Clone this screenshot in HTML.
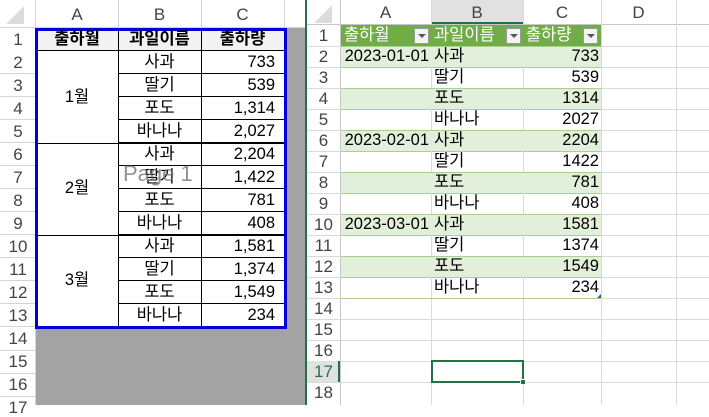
<!DOCTYPE html>
<html><head><meta charset="utf-8"><style>
*{margin:0;padding:0;box-sizing:border-box}
body{width:709px;height:405px;overflow:hidden;background:#fff;position:relative;font-family:"Liberation Sans","Noto Sans CJK KR",sans-serif;font-size:16.5px;color:#000}
div{position:absolute}
.t{white-space:nowrap;line-height:1;margin-top:-1px}
.h{color:#444;font-size:17px;text-align:center}
</style></head><body>
<!-- LEFT PANE -->
<div style="left:0;top:0;width:36px;height:28px;background:#fff;border-right:1px solid #d4d4d4;border-bottom:1px solid #d4d4d4"></div>
<div style="left:6px;top:6px;width:0;height:0;border-left:18px solid transparent;border-bottom:18px solid #dcdcdc"></div>
<div class="h t" style="left:36px;top:7px;width:82px">A</div>
<div class="h t" style="left:118px;top:7px;width:83px">B</div>
<div class="h t" style="left:201px;top:7px;width:83px">C</div>
<div style="left:118px;top:0;width:1px;height:28px;background:#d4d4d4"></div>
<div style="left:201px;top:0;width:1px;height:28px;background:#d4d4d4"></div>
<div style="left:284px;top:0;width:1px;height:28px;background:#d4d4d4"></div>
<div style="left:0;top:27px;width:305px;height:1px;background:#d4d4d4"></div>
<div style="left:35px;top:0;width:1px;height:405px;background:#d4d4d4"></div>
<div class="h t" style="left:0;top:32px;width:36px">1</div>
<div class="h t" style="left:0;top:55px;width:36px">2</div>
<div class="h t" style="left:0;top:78px;width:36px">3</div>
<div class="h t" style="left:0;top:101px;width:36px">4</div>
<div class="h t" style="left:0;top:124px;width:36px">5</div>
<div class="h t" style="left:0;top:147px;width:36px">6</div>
<div class="h t" style="left:0;top:170px;width:36px">7</div>
<div class="h t" style="left:0;top:193px;width:36px">8</div>
<div class="h t" style="left:0;top:216px;width:36px">9</div>
<div class="h t" style="left:0;top:239px;width:36px">10</div>
<div class="h t" style="left:0;top:262px;width:36px">11</div>
<div class="h t" style="left:0;top:285px;width:36px">12</div>
<div class="h t" style="left:0;top:308px;width:36px">13</div>
<div class="h t" style="left:0;top:331px;width:36px">14</div>
<div class="h t" style="left:0;top:354px;width:36px">15</div>
<div class="h t" style="left:0;top:377px;width:36px">16</div>
<div class="h t" style="left:0;top:400px;width:36px">17</div>
<div style="left:0;top:51px;width:36px;height:276px;background:repeating-linear-gradient(to bottom,transparent 0,transparent 22px,#d4d4d4 22px,#d4d4d4 23px)"></div>
<div style="left:0;top:350px;width:36px;height:1px;background:#d4d4d4"></div>
<div style="left:0;top:373px;width:36px;height:1px;background:#d4d4d4"></div>
<div style="left:0;top:396px;width:36px;height:1px;background:#d4d4d4"></div>
<div style="left:36px;top:328px;width:270px;height:77px;background:#a3a3a3"></div>
<div style="left:285px;top:28px;width:21px;height:300px;background:#a3a3a3"></div>
<!-- table -->
<div style="left:36px;top:28px;width:249px;height:23px;background:#f2f2f2"></div>
<div style="left:36px;top:51px;width:249px;height:276px;background:#fff"></div>
<div style="left:36px;top:50px;width:249px;height:1px;background:#000"></div>
<div style="left:118px;top:28px;width:1px;height:299px;background:#000"></div>
<div style="left:201px;top:28px;width:1px;height:299px;background:#000"></div>
<div style="left:36px;top:143px;width:249px;height:1px;background:#000"></div>
<div style="left:36px;top:235px;width:249px;height:1px;background:#000"></div>
<div style="left:118px;top:73px;width:167px;height:253px;background:repeating-linear-gradient(to bottom,#000 0,#000 1px,transparent 1px,transparent 23px)"></div>
<div style="left:35px;top:28px;width:252px;height:301px;border:3px solid #0000d8"></div>
<div class="t" style="left:36px;top:32px;width:82px;text-align:center;font-weight:bold">출하월</div>
<div class="t" style="left:118px;top:32px;width:83px;text-align:center;font-weight:bold">과일이름</div>
<div class="t" style="left:201px;top:32px;width:83px;text-align:center;font-weight:bold">출하량</div>
<div class="t" style="left:36px;top:90px;width:82px;text-align:center">1월</div>
<div class="t" style="left:36px;top:181px;width:82px;text-align:center">2월</div>
<div class="t" style="left:36px;top:273px;width:82px;text-align:center">3월</div>
<div class="t" style="left:118px;top:55px;width:83px;text-align:center">사과</div>
<div class="t" style="left:118px;top:78px;width:83px;text-align:center">딸기</div>
<div class="t" style="left:118px;top:101px;width:83px;text-align:center">포도</div>
<div class="t" style="left:118px;top:124px;width:83px;text-align:center">바나나</div>
<div class="t" style="left:118px;top:147px;width:83px;text-align:center">사과</div>
<div class="t" style="left:118px;top:170px;width:83px;text-align:center">딸기</div>
<div class="t" style="left:118px;top:193px;width:83px;text-align:center">포도</div>
<div class="t" style="left:118px;top:216px;width:83px;text-align:center">바나나</div>
<div class="t" style="left:118px;top:239px;width:83px;text-align:center">사과</div>
<div class="t" style="left:118px;top:262px;width:83px;text-align:center">딸기</div>
<div class="t" style="left:118px;top:285px;width:83px;text-align:center">포도</div>
<div class="t" style="left:118px;top:308px;width:83px;text-align:center">바나나</div>
<div class="t" style="left:201px;top:55px;width:74px;text-align:right">733</div>
<div class="t" style="left:201px;top:78px;width:74px;text-align:right">539</div>
<div class="t" style="left:201px;top:101px;width:74px;text-align:right">1,314</div>
<div class="t" style="left:201px;top:124px;width:74px;text-align:right">2,027</div>
<div class="t" style="left:201px;top:147px;width:74px;text-align:right">2,204</div>
<div class="t" style="left:201px;top:170px;width:74px;text-align:right">1,422</div>
<div class="t" style="left:201px;top:193px;width:74px;text-align:right">781</div>
<div class="t" style="left:201px;top:216px;width:74px;text-align:right">408</div>
<div class="t" style="left:201px;top:239px;width:74px;text-align:right">1,581</div>
<div class="t" style="left:201px;top:262px;width:74px;text-align:right">1,374</div>
<div class="t" style="left:201px;top:285px;width:74px;text-align:right">1,549</div>
<div class="t" style="left:201px;top:308px;width:74px;text-align:right">234</div>
<div class="t" style="left:123px;top:164px;font-size:22px;color:rgba(110,110,110,0.75)">Page 1</div>
<div style="left:305px;top:0;width:2px;height:405px;background:#217346"></div>
<!-- RIGHT PANE -->
<div style="left:307px;top:0;width:402px;height:405px;background:#fff"></div>
<div style="left:314px;top:5px;width:0;height:0;border-left:18px solid transparent;border-bottom:18px solid #dcdcdc"></div>
<div style="left:431px;top:0;width:92px;height:24px;background:#e1e1e1;border-bottom:2px solid #217346"></div>
<div class="h t" style="left:340px;top:5px;width:91px">A</div>
<div class="h t" style="left:431px;top:5px;width:92px">B</div>
<div class="h t" style="left:523px;top:5px;width:78px">C</div>
<div class="h t" style="left:601px;top:5px;width:75px">D</div>
<div style="left:307px;top:24px;width:402px;height:1px;background:#c6c6c6"></div>
<div style="left:340px;top:0;width:1px;height:405px;background:#c6c6c6"></div>
<div style="left:431px;top:0;width:1px;height:405px;background:#dadada"></div>
<div style="left:523px;top:0;width:1px;height:405px;background:#dadada"></div>
<div style="left:601px;top:0;width:1px;height:405px;background:#dadada"></div>
<div style="left:676px;top:0;width:1px;height:405px;background:#dadada"></div>
<div style="left:307px;top:46px;width:402px;height:357px;background:repeating-linear-gradient(to bottom,#dadada 0,#dadada 1px,transparent 1px,transparent 21px)"></div>
<div style="left:307px;top:361px;width:33px;height:21px;background:#e1e1e1;border-right:2px solid #217346"></div>
<div class="h t" style="left:307px;top:28px;width:33px">1</div>
<div class="h t" style="left:307px;top:49px;width:33px">2</div>
<div class="h t" style="left:307px;top:70px;width:33px">3</div>
<div class="h t" style="left:307px;top:91px;width:33px">4</div>
<div class="h t" style="left:307px;top:112px;width:33px">5</div>
<div class="h t" style="left:307px;top:133px;width:33px">6</div>
<div class="h t" style="left:307px;top:154px;width:33px">7</div>
<div class="h t" style="left:307px;top:175px;width:33px">8</div>
<div class="h t" style="left:307px;top:196px;width:33px">9</div>
<div class="h t" style="left:307px;top:217px;width:33px">10</div>
<div class="h t" style="left:307px;top:238px;width:33px">11</div>
<div class="h t" style="left:307px;top:259px;width:33px">12</div>
<div class="h t" style="left:307px;top:280px;width:33px">13</div>
<div class="h t" style="left:307px;top:301px;width:33px">14</div>
<div class="h t" style="left:307px;top:322px;width:33px">15</div>
<div class="h t" style="left:307px;top:343px;width:33px">16</div>
<div class="h t" style="left:307px;top:364px;width:33px;color:#217346">17</div>
<div class="h t" style="left:307px;top:385px;width:33px">18</div>
<div style="left:341px;top:25px;width:260px;height:21px;background:#70ad47"></div>
<div style="left:341px;top:46px;width:260px;height:21px;background:#e2efda"></div>
<div style="left:341px;top:67px;width:260px;height:21px;background:#fff"></div>
<div style="left:341px;top:88px;width:260px;height:21px;background:#e2efda"></div>
<div style="left:341px;top:109px;width:260px;height:21px;background:#fff"></div>
<div style="left:341px;top:130px;width:260px;height:21px;background:#e2efda"></div>
<div style="left:341px;top:151px;width:260px;height:21px;background:#fff"></div>
<div style="left:341px;top:172px;width:260px;height:21px;background:#e2efda"></div>
<div style="left:341px;top:193px;width:260px;height:21px;background:#fff"></div>
<div style="left:341px;top:214px;width:260px;height:21px;background:#e2efda"></div>
<div style="left:341px;top:235px;width:260px;height:21px;background:#fff"></div>
<div style="left:341px;top:256px;width:260px;height:21px;background:#e2efda"></div>
<div style="left:341px;top:277px;width:260px;height:21px;background:#fff"></div>
<div style="left:341px;top:46px;width:260px;height:253px;background:repeating-linear-gradient(to bottom,#a9d08e 0,#a9d08e 1px,transparent 1px,transparent 21px)"></div>
<div style="left:431px;top:67px;width:1px;height:21px;background:#dadada"></div>
<div style="left:523px;top:67px;width:1px;height:21px;background:#dadada"></div>
<div style="left:431px;top:109px;width:1px;height:21px;background:#dadada"></div>
<div style="left:523px;top:109px;width:1px;height:21px;background:#dadada"></div>
<div style="left:431px;top:151px;width:1px;height:21px;background:#dadada"></div>
<div style="left:523px;top:151px;width:1px;height:21px;background:#dadada"></div>
<div style="left:431px;top:193px;width:1px;height:21px;background:#dadada"></div>
<div style="left:523px;top:193px;width:1px;height:21px;background:#dadada"></div>
<div style="left:431px;top:235px;width:1px;height:21px;background:#dadada"></div>
<div style="left:523px;top:235px;width:1px;height:21px;background:#dadada"></div>
<div style="left:431px;top:277px;width:1px;height:21px;background:#dadada"></div>
<div style="left:523px;top:277px;width:1px;height:21px;background:#dadada"></div>
<div class="t" style="left:344px;top:28px;color:#fff">출하월</div>
<div class="t" style="left:434px;top:28px;color:#fff">과일이름</div>
<div class="t" style="left:526px;top:28px;color:#fff">출하량</div>
<div style="left:414px;top:28px;width:15px;height:16px;background:#f4f4f4;border:1px solid #999"><div style="left:3px;top:5px;border-left:4px solid transparent;border-right:4px solid transparent;border-top:4px solid #555"></div></div>
<div style="left:506px;top:28px;width:15px;height:16px;background:#f4f4f4;border:1px solid #999"><div style="left:3px;top:5px;border-left:4px solid transparent;border-right:4px solid transparent;border-top:4px solid #555"></div></div>
<div style="left:583px;top:28px;width:15px;height:16px;background:#f4f4f4;border:1px solid #999"><div style="left:3px;top:5px;border-left:4px solid transparent;border-right:4px solid transparent;border-top:4px solid #555"></div></div>
<div class="t" style="left:341px;top:49px;width:88px;text-align:right">2023-01-01</div>
<div class="t" style="left:341px;top:133px;width:88px;text-align:right">2023-02-01</div>
<div class="t" style="left:341px;top:217px;width:88px;text-align:right">2023-03-01</div>
<div class="t" style="left:434px;top:49px">사과</div>
<div class="t" style="left:434px;top:70px">딸기</div>
<div class="t" style="left:434px;top:91px">포도</div>
<div class="t" style="left:434px;top:112px">바나나</div>
<div class="t" style="left:434px;top:133px">사과</div>
<div class="t" style="left:434px;top:154px">딸기</div>
<div class="t" style="left:434px;top:175px">포도</div>
<div class="t" style="left:434px;top:196px">바나나</div>
<div class="t" style="left:434px;top:217px">사과</div>
<div class="t" style="left:434px;top:238px">딸기</div>
<div class="t" style="left:434px;top:259px">포도</div>
<div class="t" style="left:434px;top:280px">바나나</div>
<div class="t" style="left:523px;top:49px;width:76px;text-align:right">733</div>
<div class="t" style="left:523px;top:70px;width:76px;text-align:right">539</div>
<div class="t" style="left:523px;top:91px;width:76px;text-align:right">1314</div>
<div class="t" style="left:523px;top:112px;width:76px;text-align:right">2027</div>
<div class="t" style="left:523px;top:133px;width:76px;text-align:right">2204</div>
<div class="t" style="left:523px;top:154px;width:76px;text-align:right">1422</div>
<div class="t" style="left:523px;top:175px;width:76px;text-align:right">781</div>
<div class="t" style="left:523px;top:196px;width:76px;text-align:right">408</div>
<div class="t" style="left:523px;top:217px;width:76px;text-align:right">1581</div>
<div class="t" style="left:523px;top:238px;width:76px;text-align:right">1374</div>
<div class="t" style="left:523px;top:259px;width:76px;text-align:right">1549</div>
<div class="t" style="left:523px;top:280px;width:76px;text-align:right">234</div>
<div style="left:597px;top:294px;width:0;height:0;border-left:4px solid transparent;border-bottom:4px solid #3b5ba5"></div>
<div style="left:431px;top:360px;width:93px;height:23px;border:2px solid #217346"></div>
<div style="left:520px;top:379px;width:6px;height:6px;background:#217346;border:1px solid #fff"></div>
</body></html>
